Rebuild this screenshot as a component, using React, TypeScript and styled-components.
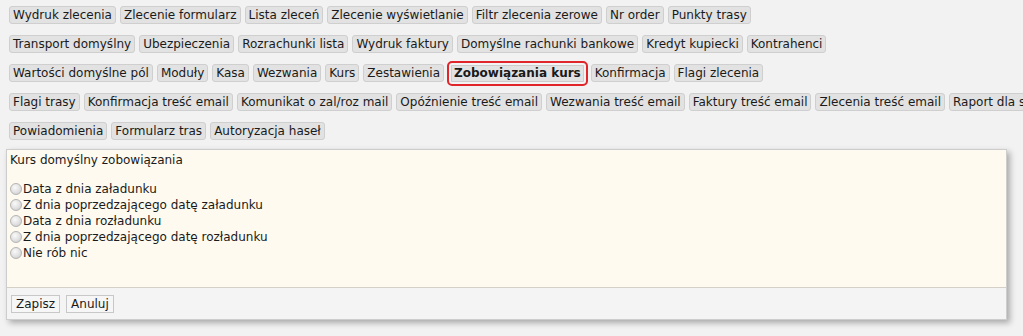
import React, { useState } from "react";
import styled, { createGlobalStyle } from "styled-components";

const GlobalStyle = createGlobalStyle`
    html, body {
        margin: 0;
        padding: 0;
        background: #f2f2f2;
        font-family: Verdana, "DejaVu Sans", sans-serif;
        font-size: 12px;
        color: #1a1a1a;
        overflow: hidden;
    }
`;

const tabRows: string[][] = [
    [
        "Wydruk zlecenia",
        "Zlecenie formularz",
        "Lista zleceń",
        "Zlecenie wyświetlanie",
        "Filtr zlecenia zerowe",
        "Nr order",
        "Punkty trasy",
    ],
    [
        "Transport domyślny",
        "Ubezpieczenia",
        "Rozrachunki lista",
        "Wydruk faktury",
        "Domyślne rachunki bankowe",
        "Kredyt kupiecki",
        "Kontrahenci",
    ],
    [
        "Wartości domyślne pól",
        "Moduły",
        "Kasa",
        "Wezwania",
        "Kurs",
        "Zestawienia",
        "Zobowiązania kurs",
        "Konfirmacja",
        "Flagi zlecenia",
    ],
    [
        "Flagi trasy",
        "Konfirmacja treść email",
        "Komunikat o zal/roz mail",
        "Opóźnienie treść email",
        "Wezwania treść email",
        "Faktury treść email",
        "Zlecenia treść email",
        "Raport dla spedytora",
    ],
    ["Powiadomienia", "Formularz tras", "Autoryzacja haseł"],
];

const options = [
    "Data z dnia załadunku",
    "Z dnia poprzedzającego datę załadunku",
    "Data z dnia rozładunku",
    "Z dnia poprzedzającego datę rozładunku",
    "Nie rób nic",
];

export default function App() {
    const [active, setActive] = useState("Zobowiązania kurs");
    const [choice, setChoice] = useState<number | null>(null);

    return (
        <>
            <GlobalStyle />
            <Page>
                <TabArea>
                    {tabRows.map((row, i) => (
                        <TabRow key={i}>
                            {row.map((name) => (
                                <TabButton
                                    key={name}
                                    $active={name === active}
                                    onClick={() => setActive(name)}
                                >
                                    {name}
                                </TabButton>
                            ))}
                        </TabRow>
                    ))}
                </TabArea>
                <Panel>
                    <PanelBody>
                        <PanelTitle>Kurs domyślny zobowiązania</PanelTitle>
                        <RadioList>
                            {options.map((label, i) => (
                                <RadioLabel key={label}>
                                    <Radio
                                        type="radio"
                                        name="kurs"
                                        checked={choice === i}
                                        onChange={() => setChoice(i)}
                                    />
                                    {label}
                                </RadioLabel>
                            ))}
                        </RadioList>
                    </PanelBody>
                    <PanelFooter>
                        <FooterButton>Zapisz</FooterButton>
                        <FooterButton>Anuluj</FooterButton>
                    </PanelFooter>
                </Panel>
            </Page>
        </>
    );
}

const Page = styled.div`
    width: 1023px;
    height: 336px;
    overflow: hidden;
`;

// zakładki
const TabArea = styled.div`
    display: flex;
    flex-direction: column;
    gap: 11px;
    padding: 6px 0 0 9px;
`;

const TabRow = styled.div`
    display: flex;
    align-items: center;
    gap: 4px;
    height: 18px;
    white-space: nowrap;
`;

const TabButton = styled.button<{ $active: boolean }>`
    font-family: inherit;
    font-size: 12px;
    line-height: 14px;
    height: ${(p) => (p.$active ? "25px" : "18px")};
    padding: ${(p) => (p.$active ? "0 5px" : "1px 3px")};
    color: #1a1a1a;
    background: #e2e2e2;
    border: ${(p) => (p.$active ? "2px solid #e0262b" : "1px solid #cfcfcf")};
    border-radius: ${(p) => (p.$active ? "5px" : "3px")};
    box-shadow: ${(p) => (p.$active ? "inset 0 0 0 2px #f3f3f3, inset 0 0 0 3px #cdcdcd" : "none")};
    margin: ${(p) => (p.$active ? "0 -1px" : "0")};
    font-weight: ${(p) => (p.$active ? "bold" : "normal")};
    cursor: pointer;
    flex-shrink: 0;
`;

// panel ustawień
const Panel = styled.div`
    margin: 9px 0 0 6px;
    width: 1001px;
    border: 1px solid #cdcdcd;
    box-shadow: 3px 3px 6px rgba(0, 0, 0, 0.3);
    box-sizing: border-box;
`;

const PanelBody = styled.div`
    background: #fffaf0;
    height: 138px;
    padding: 2px 3px;
    box-sizing: border-box;
    border-bottom: 1px solid #d4d0c8;
`;

const PanelTitle = styled.div`
    line-height: 16px;
    margin-bottom: 13px;
`;

const RadioList = styled.div`
    display: flex;
    flex-direction: column;
`;

const RadioLabel = styled.label`
    display: flex;
    align-items: center;
    line-height: 16px;
    height: 16px;
`;

const Radio = styled.input`
    appearance: none;
    width: 12px;
    height: 12px;
    margin: 0 1px 0 0;
    border-radius: 50%;
    border: 1px solid #b4b4b4;
    background: radial-gradient(circle at 40% 35%, #fafafa 0%, #dedede 60%, #c4c4c4 100%);
    box-sizing: border-box;
    &:checked {
        background: radial-gradient(circle, #333 0 2px, #ececec 3px);
    }
`;

const PanelFooter = styled.div`
    background: #f4f4f4;
    height: 31px;
    display: flex;
    align-items: center;
    gap: 6px;
    padding: 0 4px;
`;

const FooterButton = styled.button`
    font-family: inherit;
    font-size: 12px;
    height: 18px;
    padding: 0 4px;
    line-height: 14px;
    color: #1a1a1a;
    background: #f6f6f6;
    border: 1px solid #c8c8c8;
    border-radius: 0;
`;
